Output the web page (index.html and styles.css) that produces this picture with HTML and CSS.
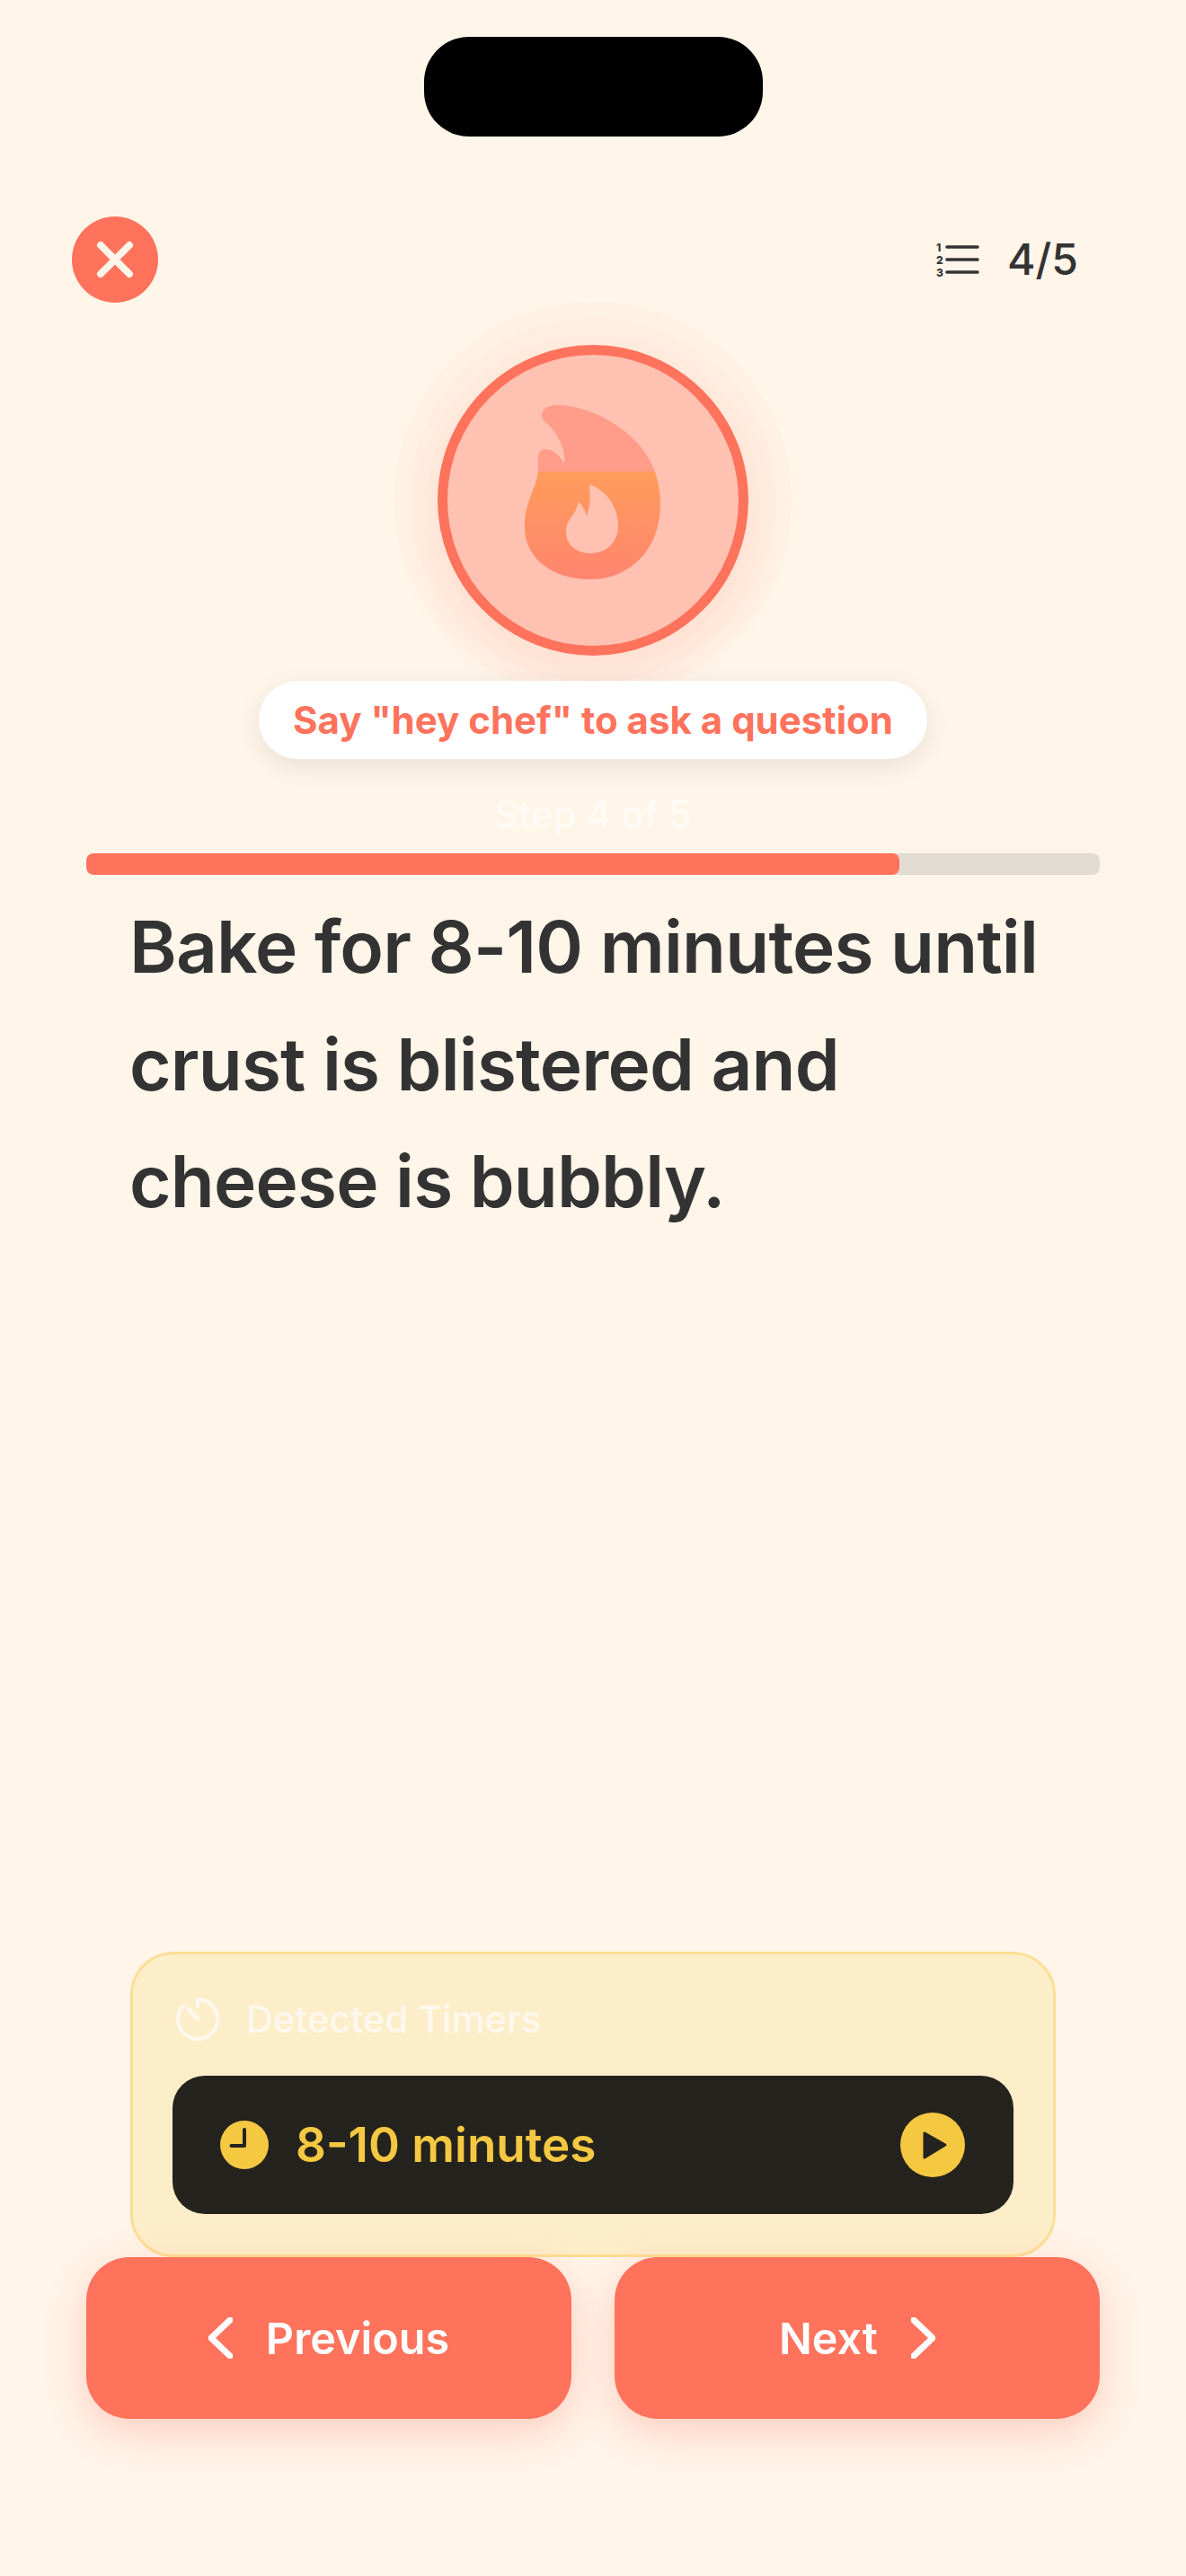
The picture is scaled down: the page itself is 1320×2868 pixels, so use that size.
FILE: index.html
```html
<!DOCTYPE html>
<html lang="en">
<head>
<meta charset="utf-8">
<title>Cooking step</title>
<link rel="stylesheet" href="styles.css">
</head>
<body>
<main class="screen">
  <div class="island"></div>

  <header class="topbar">
    <button class="close" type="button" aria-label="Close">
      <svg viewBox="0 0 96 96" width="96" height="96"><path d="M32 32 64 64M64 32 32 64" class="close-x"/></svg>
    </button>
    <div class="count">
      <svg class="count-icon" viewBox="0 0 48 40" width="48" height="40">
        <text x="1" y="10.5" class="count-num">1</text>
        <text x="1" y="24.5" class="count-num">2</text>
        <text x="1" y="38.5" class="count-num">3</text>
        <path d="M13 6H47M13 20H47M13 34H47" class="count-lines"/>
      </svg>
      <span>4/5</span>
    </div>
  </header>

  <section class="hero">
    <div class="halo">
      <div class="orb">
        <svg class="flame" viewBox="0 0 152 196" width="152" height="196">
          <defs>
            <linearGradient id="flameFill" gradientUnits="userSpaceOnUse" x1="0" y1="74" x2="0" y2="194">
              <stop offset="0" stop-color="#ff9c5a"/>
              <stop offset="1" stop-color="#ff8570"/>
            </linearGradient>
            <clipPath id="flameTop"><rect x="0" y="0" width="152" height="74"/></clipPath>
            <clipPath id="flameBottom"><rect x="0" y="74" width="152" height="122"/></clipPath>
          </defs>
          <path clip-path="url(#flameTop)" fill="#ff9c8a" d="M36 0C60 0 92 12 116 33C136 50 151 76 151 110C151 160 118 194 73 194C30 194 0 170 0 136C0 104 15 92 15 70C15 62 13 49 23 49C32 49 40 57 44 66C46 48 36 30 23 19C15 11 20 0 36 0Z"/>
          <path clip-path="url(#flameBottom)" fill="url(#flameFill)" d="M36 0C60 0 92 12 116 33C136 50 151 76 151 110C151 160 118 194 73 194C30 194 0 170 0 136C0 104 15 92 15 70C15 62 13 49 23 49C32 49 40 57 44 66C46 48 36 30 23 19C15 11 20 0 36 0Z"/>
          <path fill="#ffc1b1" d="M74 89C91 96 104 113 104 134C104 153 91 165 73 165C57 165 46 155 46 141C46 127 57 122 59 110C59 108 61 108 62 110C65 113 67 118 69 123C73 114 73 103 72 91C72 89 73 88 74 89Z"/>
        </svg>
      </div>
    </div>
    <p class="hint">Say "hey chef" to ask a question</p>
    <p class="step-label">Step 4 of 5</p>
  </section>

  <div class="progress"><div class="progress-fill"></div></div>

  <p class="instruction">Bake for 8-10 minutes until crust is blistered and cheese is bubbly.</p>

  <section class="timers">
    <div class="timers-head">
      <svg viewBox="0 0 48 48" width="48" height="48" class="stopwatch">
        <path d="M24 2A22 22 0 1 1 8.5 8.5" class="sw-ring"/>
        <path d="M24 2V10" class="sw-ring"/>
        <path d="M14 13 24 24" class="sw-hand"/>
      </svg>
      <span>Detected Timers</span>
    </div>
    <div class="timer-row">
      <svg viewBox="0 0 54 54" width="54" height="54" class="clock">
        <circle cx="27" cy="27" r="27" class="clock-face"/>
        <path d="M27 10V28H12.5" class="clock-hands"/>
      </svg>
      <span class="timer-text">8-10 minutes</span>
      <svg viewBox="0 0 72 72" width="72" height="72" class="play">
        <circle cx="36" cy="36" r="36" class="clock-face"/>
        <path d="M27 23V50L50 36Z" class="play-tri"/>
      </svg>
    </div>
  </section>

  <nav class="nav">
    <button class="nav-btn" type="button">
      <svg viewBox="0 0 27 46" width="27" height="46"><path d="M24 3 3 23 24 43" class="chev"/></svg>
      <span>Previous</span>
    </button>
    <button class="nav-btn" type="button">
      <span>Next</span>
      <svg viewBox="0 0 27 46" width="27" height="46"><path d="M3 3 24 23 3 43" class="chev"/></svg>
    </button>
  </nav>
</main>
</body>
</html>
```
FILE: styles.css
```css
* { box-sizing: border-box; }

html, body {
  margin: 0;
  padding: 0;
  background: #fff5e9;
}

.screen {
  width: 1320px;
  height: 2868px;
  overflow: hidden;
  padding-top: 41px;
  font-family: Inter, "Liberation Sans", sans-serif;
  color: #333333;
  display: flex;
  flex-direction: column;
}

.island {
  width: 377px;
  height: 111px;
  margin: 0 auto;
  background: #000;
  border-radius: 50px;
  flex: none;
}

.topbar {
  display: flex;
  align-items: center;
  justify-content: space-between;
  margin-top: 89px;
  padding: 0 120px 0 80px;
  height: 96px;
  flex: none;
}

.close {
  width: 96px;
  height: 96px;
  padding: 0;
  border: 0;
  border-radius: 50%;
  background: #ff725c;
  display: block;
}

.close-x {
  fill: none;
  stroke: #fff5e9;
  stroke-width: 8;
  stroke-linecap: round;
}

.count {
  display: flex;
  align-items: center;
  gap: 32px;
  font-size: 48px;
  font-weight: 500;
  line-height: 56px;
}

.count-icon { overflow: visible; }

.count-num {
  font-size: 12px;
  font-weight: 800;
  fill: #333333;
}

.count-lines {
  fill: none;
  stroke: #333333;
  stroke-width: 3.6;
  stroke-linecap: round;
}

.hero {
  display: flex;
  flex-direction: column;
  align-items: center;
  flex: none;
}

.halo {
  margin-top: 47px;
  width: 346px;
  height: 346px;
  border-radius: 50%;
  box-shadow:
    0 0 0 30px rgba(255, 114, 92, 0.025),
    0 0 0 48px rgba(255, 114, 92, 0.025),
    0 22px 50px 6px rgba(255, 114, 92, 0.09),
    0 0 70px 30px rgba(255, 114, 92, 0.012);
}

.orb {
  width: 346px;
  height: 346px;
  border-radius: 50%;
  border: 11px solid #ff725c;
  background: #ffc1b1;
  display: flex;
  align-items: center;
  justify-content: center;
}

.flame {
  display: block;
  margin-bottom: 16px;
}

.hint {
  margin: 28px 0 0;
  padding: 0 38px;
  height: 87px;
  line-height: 87px;
  border-radius: 44px;
  background: #fff;
  color: #ff725c;
  font-size: 42px;
  font-weight: 700;
  box-shadow: 0 8px 30px rgba(0, 0, 0, 0.09);
  position: relative;
}

.step-label {
  margin: 42px 0 0;
  height: 40px;
  line-height: 40px;
  font-size: 42px;
  font-weight: 500;
  color: #fffbf6;
}

.progress {
  margin: 23px 96px 0;
  height: 24px;
  background: #e2dbd1;
  border-radius: 8px;
  flex: none;
  overflow: hidden;
}

.progress-fill {
  width: 80.2%;
  height: 100%;
  background: #ff725c;
  border-radius: 8px;
}

.instruction {
  margin: 15px 120px 0 144px;
  font-size: 80px;
  font-weight: 600;
  letter-spacing: -0.8px;
  line-height: 130.5px;
  flex: none;
}

.timers {
  margin: auto 145px 0;
  height: 340px;
  padding: 48px 44px 0;
  border: 3px solid #fcdf94;
  border-radius: 48px;
  background: #fdeeca;
  flex: none;
}

.timers-head {
  display: flex;
  align-items: center;
  gap: 30px;
  height: 48px;
  margin-left: 4px;
  color: #fff8ee;
  font-size: 41.5px;
  font-weight: 500;
}

.stopwatch { flex: none; }

.sw-ring {
  fill: none;
  stroke: #fff8ee;
  stroke-width: 4;
  stroke-linecap: round;
}

.sw-hand {
  fill: none;
  stroke: #fff8ee;
  stroke-width: 5;
  stroke-linecap: round;
}

.timer-row {
  margin-top: 39px;
  height: 154px;
  padding: 0 54px 0 53px;
  border-radius: 36px;
  background: #25231d;
  display: flex;
  align-items: center;
  color: #f5c842;
}

.timer-text {
  margin-left: 30px;
  flex: 1;
  font-size: 53px;
  font-weight: 600;
}

.clock-face { fill: #f5c842; }

.clock-hands {
  fill: none;
  stroke: #25231d;
  stroke-width: 4;
  stroke-linecap: round;
  stroke-linejoin: round;
}

.play-tri {
  fill: #25231d;
  stroke: #25231d;
  stroke-width: 3;
  stroke-linejoin: round;
}

.nav {
  margin: 0 96px 175px;
  display: grid;
  grid-template-columns: 1fr 1fr;
  gap: 48px;
  flex: none;
}

.nav-btn {
  height: 180px;
  border: 0;
  border-radius: 48px;
  background: #ff725c;
  color: #fff;
  font-family: inherit;
  font-size: 48.5px;
  font-weight: 600;
  display: flex;
  align-items: center;
  justify-content: center;
  gap: 37px;
  box-shadow: 0 14px 46px rgba(255, 114, 92, 0.3);
}

.chev {
  fill: none;
  stroke: #fff;
  stroke-width: 7;
  stroke-linecap: round;
  stroke-linejoin: round;
}
```
